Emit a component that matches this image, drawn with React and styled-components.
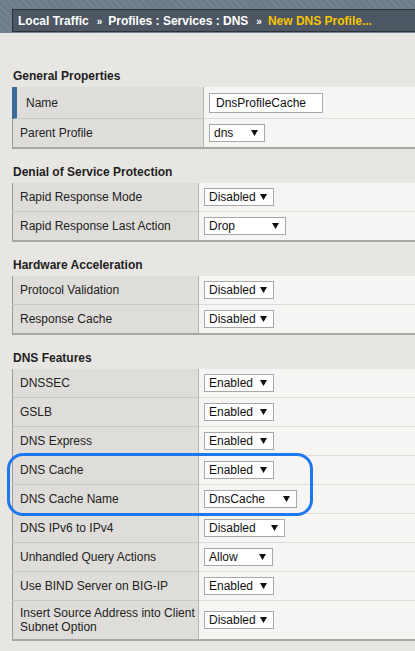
import React from "react";
import styled, { createGlobalStyle } from "styled-components";

const Global = createGlobalStyle`
  html, body { margin: 0; padding: 0; background: #e8e6e2; }
  body { font-family: "Liberation Sans", Arial, sans-serif; font-size: 12px; color: #222; overflow: hidden; }
  * { box-sizing: border-box; }
`;

const Page = styled.div`
  width: 415px;
  height: 651px;
  overflow: hidden;
  background: #e8e6e2;
`;

const Header = styled.div`
  height: 33px;
  padding: 9px 0 1px 12px;
  background: repeating-linear-gradient(45deg, #6c7a8a 0 3px, #74818f 3px 5px);
`;

const Crumbs = styled.div`
  height: 23px;
  margin-right: -20px;
  background: #4d5764;
  border: 1px solid #2c3137;
  display: flex;
  align-items: center;
  padding-left: 5px;
  font-weight: bold;
  font-size: 12px;
  color: #fff;
  white-space: nowrap;
`;

const Sep = styled.span`
  font-size: 10px;
  padding: 2px 6px 0 8px;
  color: #fff;
`;

const Current = styled.span`
  color: #f7c400;
`;

const Content = styled.div`
  padding: 34px 0 0 12px;
`;

const Section = styled.section`
  position: relative;
  margin-bottom: 14px;
`;

const Title = styled.div`
  height: 18px;
  line-height: 18px;
  margin: 0 0 2px 1px;
  font-weight: bold;
  font-size: 12px;
  color: #1e1e1e;
`;

const Table = styled.div`
  margin-right: -30px;
`;

const Row = styled.div`
  display: grid;
  grid-template-columns: ${(p) => p.$labelW}px 1fr;
  min-height: ${(p) => p.$h}px;
`;

const Label = styled.div`
  display: flex;
  align-items: center;
  background: #dfddd9;
  border-left: ${(p) => (p.$marked ? "5px solid #3b6a9b" : "1px solid #9c9b99")};
  border-right: 1px solid #b6b4b0;
  border-bottom: ${(p) => (p.$last ? "2px solid #a9a7a3" : "1px solid #c9c7c3")};
  padding: 0 2px 0 ${(p) => (p.$marked ? 9 : 7)}px;
  line-height: 14px;
  color: #222;
`;

const Value = styled.div`
  display: flex;
  align-items: center;
  background: #f6f5f3;
  border-bottom: ${(p) => (p.$last ? "2px solid #a9a7a3" : "1px solid #dddcd9")};
  padding-left: 5px;
`;

const Select = styled.div`
  display: inline-flex;
  align-items: center;
  justify-content: space-between;
  width: ${(p) => p.$w}px;
  height: 18px;
  background: #fff;
  border: 1px solid #a8a8a8;
  padding: 0 6px 0 4px;
  font-size: 12px;
  color: #111;
`;

const Input = styled.div`
  display: flex;
  align-items: center;
  width: 114px;
  height: 20px;
  background: #fff;
  border: 1px solid #a8a8a8;
  padding-left: 6px;
  font-size: 12px;
  color: #111;
`;

const Highlight = styled.div`
  position: absolute;
  left: -5px;
  top: ${(p) => p.$top}px;
  width: 306px;
  height: 63px;
  border: 3px solid #1f77f0;
  border-radius: 16px;
  pointer-events: none;
`;

const Arrow = () => (
  <svg width="7" height="6" viewBox="0 0 7 6">
    <polygon points="0,0 7,0 3.5,6" fill="#111" />
  </svg>
);

const Drop = ({ w, children }) => (
  <Select $w={w}>
    <span>{children}</span>
    <Arrow />
  </Select>
);

const sections = [
  {
    title: "General Properties",
    labelW: 192,
    rows: [
      { label: "Name", input: "DnsProfileCache", marked: true, h: 32 },
      { label: "Parent Profile", value: "dns", w: 56 },
    ],
  },
  {
    title: "Denial of Service Protection",
    labelW: 187,
    rows: [
      { label: "Rapid Response Mode", value: "Disabled", w: 70 },
      { label: "Rapid Response Last Action", value: "Drop", w: 82 },
    ],
  },
  {
    title: "Hardware Acceleration",
    labelW: 187,
    rows: [
      { label: "Protocol Validation", value: "Disabled", w: 70 },
      { label: "Response Cache", value: "Disabled", w: 70 },
    ],
  },
  {
    title: "DNS Features",
    labelW: 187,
    highlight: 84,
    rows: [
      { label: "DNSSEC", value: "Enabled", w: 70 },
      { label: "GSLB", value: "Enabled", w: 70 },
      { label: "DNS Express", value: "Enabled", w: 70 },
      { label: "DNS Cache", value: "Enabled", w: 70 },
      { label: "DNS Cache Name", value: "DnsCache", w: 93 },
      { label: "DNS IPv6 to IPv4", value: "Disabled", w: 81 },
      { label: "Unhandled Query Actions", value: "Allow", w: 69 },
      { label: "Use BIND Server on BIG-IP", value: "Enabled", w: 70 },
      { label: "Insert Source Address into Client Subnet Option", value: "Disabled", w: 70, h: 40 },
    ],
  },
];

export default function App() {
  return (
    <Page>
      <Global />
      <Header>
        <Crumbs>
          <span>Local Traffic</span>
          <Sep>»</Sep>
          <span>Profiles : Services : DNS</span>
          <Sep>»</Sep>
          <Current>New DNS Profile...</Current>
        </Crumbs>
      </Header>
      <Content>
        {sections.map((s) => (
          <Section key={s.title}>
            <Title>{s.title}</Title>
            <Table>
              {s.rows.map((r, i) => {
                const last = i === s.rows.length - 1;
                const h = r.h || (last ? 30 : 29);
                return (
                  <Row key={r.label} $labelW={s.labelW} $h={h}>
                    <Label $marked={r.marked} $last={last}>
                      {r.label}
                    </Label>
                    <Value $last={last}>
                      {r.input ? <Input>{r.input}</Input> : <Drop w={r.w}>{r.value}</Drop>}
                    </Value>
                  </Row>
                );
              })}
            </Table>
            {s.highlight != null && <Highlight $top={s.highlight + 20} />}
          </Section>
        ))}
      </Content>
    </Page>
  );
}
